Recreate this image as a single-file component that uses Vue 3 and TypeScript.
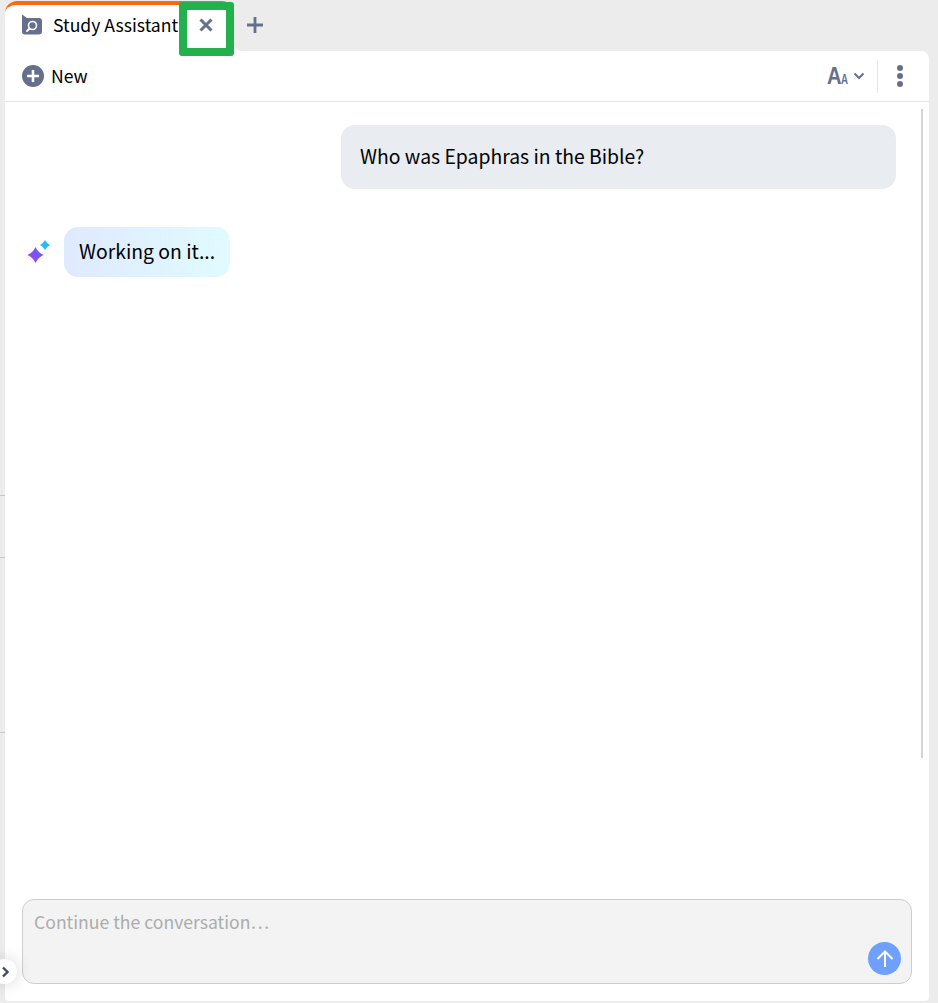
<script setup lang="ts">
import { ref } from 'vue';

const tabTitle = ref('Study Assistant');
const question = ref('Who was Epaphras in the Bible?');
const answer = ref('Working on it...');
const draft = ref('');
const ticks = [495, 557, 732];
</script>

<template>
  <div class="page">
    <span v-for="t in ticks" :key="t" class="tick" :style="{ top: t + 'px' }"></span>

    <div class="tabbar">
      <div class="tab">
        <svg class="tab-icon" width="22" height="22" viewBox="0 0 22 22">
          <path d="M1 0.5 L6 4 H18 A3 3 0 0 1 21 7 V17.5 A3 3 0 0 1 18 20.5 H4 A3 3 0 0 1 1 17.5 Z" fill="#65708c" />
          <circle cx="11.5" cy="11.5" r="4" fill="none" stroke="#fff" stroke-width="1.6" />
          <path d="M8.5 14.5 L6 17" stroke="#fff" stroke-width="1.8" stroke-linecap="round" />
        </svg>
        <span class="tab-title">{{ tabTitle }}</span>
        <button class="tab-close" aria-label="Close">
          <svg width="16" height="16" viewBox="0 0 16 16">
            <path d="M2.5 2.5 L13.5 13.5 M13.5 2.5 L2.5 13.5" stroke="#65708c" stroke-width="3" />
          </svg>
        </button>
      </div>
      <button class="tab-add" aria-label="New tab">
        <svg width="18" height="18" viewBox="0 0 18 18">
          <path d="M9 1 V17 M1 9 H17" stroke="#65708c" stroke-width="2.8" />
        </svg>
      </button>
    </div>

    <div class="panel">
      <div class="toolbar">
        <button class="new-btn">
          <svg width="22" height="22" viewBox="0 0 22 22">
            <circle cx="11" cy="11" r="11" fill="#65708c" />
            <path d="M11 5 V17 M5 11 H17" stroke="#fff" stroke-width="2.6" />
          </svg>
          <span>New</span>
        </button>
        <div class="tools">
          <button class="font-btn" aria-label="Text size">
            <span class="big-a">A</span><span class="small-a">A</span>
            <svg width="12" height="8" viewBox="0 0 12 8">
              <path d="M1.5 1.5 L6 6 L10.5 1.5" fill="none" stroke="#65708c" stroke-width="2" />
            </svg>
          </button>
          <span class="divider"></span>
          <button class="more-btn" aria-label="More">
            <i></i><i></i><i></i>
          </button>
        </div>
      </div>

      <div class="body">
        <div class="messages">
          <div class="msg-user">{{ question }}</div>
          <div class="msg-ai">
            <svg class="spark" width="24" height="24" viewBox="0 0 24 24">
              <defs>
                <linearGradient id="sparkFill" x1="0" y1="1" x2="1" y2="0">
                  <stop offset="0" stop-color="#b63cf0" />
                  <stop offset="1" stop-color="#4c66ff" />
                </linearGradient>
              </defs>
              <path d="M8.5 7 Q11 12.5 16.5 15 Q11 17.5 8.5 23 Q6 17.5 0.5 15 Q6 12.5 8.5 7 Z" fill="url(#sparkFill)" />
              <path d="M18 0 Q19.6 3.4 23 5 Q19.6 6.6 18 10 Q16.4 6.6 13 5 Q16.4 3.4 18 0 Z" fill="#25b8fb" />
            </svg>
            <div class="ai-bubble">{{ answer }}</div>
          </div>
        </div>
        <div class="scroll-line"></div>
      </div>

      <div class="composer">
        <textarea v-model="draft" class="input" placeholder="Continue the conversation…"></textarea>
        <button class="send" aria-label="Send">
          <svg width="18" height="18" viewBox="0 0 18 18">
            <path d="M9 17 V1.5 M1.5 9 L9 1.5 L16.5 9" fill="none" stroke="#fff" stroke-width="2" />
          </svg>
        </button>
      </div>
    </div>

    <button class="side-toggle" aria-label="Expand">
      <svg width="9" height="12" viewBox="0 0 9 12">
        <path d="M2 1.5 L6.5 6 L2 10.5" fill="none" stroke="#3f4a66" stroke-width="2.4" />
      </svg>
    </button>

    <div class="highlight"></div>
  </div>
</template>

<style scoped>
.page {
  position: relative;
  box-sizing: border-box;
  width: 938px;
  height: 1003px;
  padding: 0 9px 2px 5px;
  background: #ececec;
  display: flex;
  flex-direction: column;
  overflow: hidden;
  font-family: "Noto Sans CJK JP", "Noto Sans", sans-serif;
  color: #000;
}

button {
  background: none;
  border: 0;
  padding: 0;
  font: inherit;
  color: inherit;
  display: flex;
  align-items: center;
}

.tick {
  position: absolute;
  left: 0;
  width: 5px;
  height: 1px;
  background: #c8c8c8;
}

.tabbar {
  height: 51px;
  display: flex;
  align-items: flex-start;
}

.tab {
  position: relative;
  box-sizing: border-box;
  width: 229px;
  height: 50px;
  margin-top: 1px;
  padding-left: 16px;
  background: #fff;
  border-top: 4px solid #ff6a0d;
  border-radius: 12px 12px 0 0;
  display: flex;
  align-items: flex-start;
}

/* inverse corner where the tab meets the panel */
.tab::after {
  content: "";
  position: absolute;
  left: 100%;
  bottom: 0;
  width: 8px;
  height: 8px;
  background: radial-gradient(circle at 100% 0, transparent 7.5px, #fff 8px);
}

.tab-icon {
  margin-top: 9px;
}

.tab-title {
  margin-left: 10px;
  margin-top: 6px;
  font-size: 17.6px;
  line-height: 27px;
  white-space: nowrap;
}

.tab-close {
  margin-left: 19.5px;
  margin-top: 12px;
}

.tab-add {
  margin-left: 12px;
  margin-top: 16px;
}

.panel {
  flex: 1;
  min-height: 0;
  background: #fff;
  border-radius: 0 8px 4px 4px;
  display: flex;
  flex-direction: column;
}

.toolbar {
  box-sizing: border-box;
  height: 51px;
  padding: 0 17px;
  border-bottom: 1px solid #e6e6e6;
  display: flex;
  align-items: center;
  justify-content: space-between;
}

.new-btn {
  gap: 7px;
  font-size: 17.6px;
}

.new-btn span {
  margin-bottom: 2px;
}

.tools {
  display: flex;
  align-items: center;
}

.font-btn {
  align-items: baseline;
  color: #65708c;
  font-family: "Liberation Sans", sans-serif;
  font-weight: 700;
  line-height: 1;
}

.big-a {
  display: inline-block;
  width: 14.5px;
  font-size: 24px;
  transform: scaleX(0.84);
  transform-origin: left;
}

.small-a {
  display: inline-block;
  width: 7px;
  margin-right: 5px;
  font-size: 15px;
  transform: scaleX(0.65);
  transform-origin: left;
}

.font-btn svg {
  align-self: center;
}

.divider {
  width: 1px;
  height: 33px;
  margin: 0 19px 0 12px;
  background: #e6e6e6;
}

.more-btn {
  flex-direction: column;
  gap: 2.4px;
  margin-right: 9px;
}

.more-btn i {
  display: block;
  width: 6px;
  height: 6px;
  border-radius: 50%;
  background: #65708c;
}

.body {
  flex: 1;
  min-height: 0;
  position: relative;
}

.messages {
  padding: 23px 33px 0 17px;
  display: flex;
  flex-direction: column;
  font-size: 19.36px;
}

.msg-user {
  box-sizing: border-box;
  align-self: flex-end;
  width: 555px;
  height: 64px;
  padding: 0 19px;
  background: #e9ecf1;
  border-radius: 14px;
  line-height: 62px;
}

.msg-ai {
  margin-top: 38px;
  margin-left: 5px;
  display: flex;
  align-items: center;
  gap: 13px;
}

.ai-bubble {
  box-sizing: border-box;
  height: 50px;
  padding: 0 15px;
  border-radius: 14px;
  background: linear-gradient(90deg, #dfe9ff, #e0fbff);
  line-height: 48px;
}

.scroll-line {
  position: absolute;
  top: 7px;
  left: 916px;
  width: 2px;
  height: 649px;
  background: #d4d4d4;
}

.composer {
  position: relative;
  margin: 0 17px 17px;
  height: 85px;
}

.input {
  display: block;
  box-sizing: border-box;
  width: 100%;
  height: 100%;
  padding: 8px 11px;
  background: #f3f3f3;
  border: 1px solid #cdcdcd;
  border-radius: 12px;
  resize: none;
  outline: none;
  font-family: inherit;
  font-size: 17.6px;
  line-height: 27px;
}

.input::placeholder {
  color: #acacac;
  opacity: 1;
}

.send {
  position: absolute;
  right: 11px;
  bottom: 9px;
  width: 33px;
  height: 33px;
  border-radius: 50%;
  background: #6f9fff;
  justify-content: center;
}

.side-toggle {
  position: absolute;
  left: -8px;
  top: 959px;
  width: 25px;
  height: 25px;
  border-radius: 50%;
  background: #fff;
  box-shadow: 0 0 16px rgba(0, 0, 0, 0.16);
  justify-content: center;
  padding-left: 2px;
  box-sizing: border-box;
}

.highlight {
  position: absolute;
  left: 179px;
  top: 2px;
  width: 55px;
  height: 54px;
  box-sizing: border-box;
  border: 8px solid #22b14c;
  border-radius: 3px;
}
</style>
